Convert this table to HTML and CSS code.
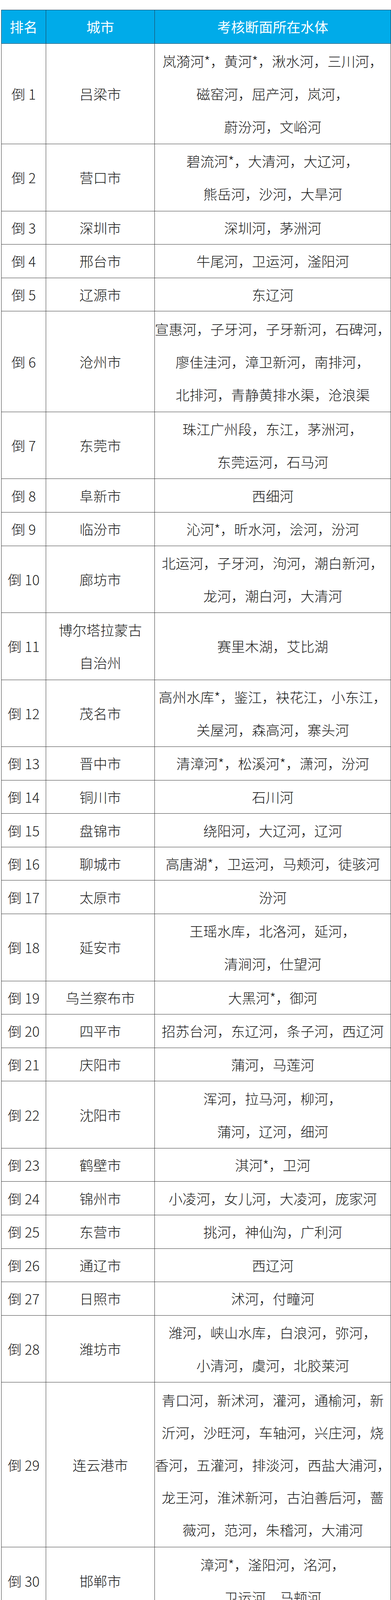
FILE: index.html
```html
<!DOCTYPE html>
<html lang="zh-CN">
<head>
<meta charset="utf-8">
<title>考核断面所在水体</title>
<link rel="stylesheet" href="styles.css">
</head>
<body>
<table class="rank">
  <colgroup>
    <col class="c-rank">
    <col class="c-city">
    <col class="c-water">
  </colgroup>
  <thead>
    <tr class="l1"><th>排名</th><th>城市</th><th>考核断面所在水体</th></tr>
  </thead>
  <tbody>
    <tr class="l3"><td>倒 1</td><td>吕梁市</td><td>岚漪河*，黄河*，湫水河，三川河，<br>磁窑河，屈产河，岚河，<br>蔚汾河，文峪河</td></tr>
    <tr class="l2"><td>倒 2</td><td>营口市</td><td>碧流河*，大清河，大辽河，<br>熊岳河，沙河，大旱河</td></tr>
    <tr class="l1"><td>倒 3</td><td>深圳市</td><td>深圳河，茅洲河</td></tr>
    <tr class="l1"><td>倒 4</td><td>邢台市</td><td>牛尾河，卫运河，滏阳河</td></tr>
    <tr class="l1"><td>倒 5</td><td>辽源市</td><td>东辽河</td></tr>
    <tr class="l3"><td>倒 6</td><td>沧州市</td><td>宣惠河，子牙河，子牙新河，石碑河，<br>廖佳洼河，漳卫新河，南排河，<br>北排河，青静黄排水渠，沧浪渠</td></tr>
    <tr class="l2"><td>倒 7</td><td>东莞市</td><td>珠江广州段，东江，茅洲河，<br>东莞运河，石马河</td></tr>
    <tr class="l1"><td>倒 8</td><td>阜新市</td><td>西细河</td></tr>
    <tr class="l1"><td>倒 9</td><td>临汾市</td><td>沁河*，昕水河，浍河，汾河</td></tr>
    <tr class="l2"><td>倒 10</td><td>廊坊市</td><td>北运河，子牙河，泃河，潮白新河，<br>龙河，潮白河，大清河</td></tr>
    <tr class="l2"><td>倒 11</td><td>博尔塔拉蒙古<br>自治州</td><td>赛里木湖，艾比湖</td></tr>
    <tr class="l2"><td>倒 12</td><td>茂名市</td><td>高州水库*，鉴江，袂花江，小东江，<br>关屋河，森高河，寨头河</td></tr>
    <tr class="l1"><td>倒 13</td><td>晋中市</td><td>清漳河*，松溪河*，潇河，汾河</td></tr>
    <tr class="l1"><td>倒 14</td><td>铜川市</td><td>石川河</td></tr>
    <tr class="l1"><td>倒 15</td><td>盘锦市</td><td>绕阳河，大辽河，辽河</td></tr>
    <tr class="l1"><td>倒 16</td><td>聊城市</td><td>高唐湖*，卫运河，马颊河，徒骇河</td></tr>
    <tr class="l1"><td>倒 17</td><td>太原市</td><td>汾河</td></tr>
    <tr class="l2"><td>倒 18</td><td>延安市</td><td>王瑶水库，北洛河，延河，<br>清涧河，仕望河</td></tr>
    <tr class="l1"><td>倒 19</td><td>乌兰察布市</td><td>大黑河*，御河</td></tr>
    <tr class="l1"><td>倒 20</td><td>四平市</td><td>招苏台河，东辽河，条子河，西辽河</td></tr>
    <tr class="l1"><td>倒 21</td><td>庆阳市</td><td>蒲河，马莲河</td></tr>
    <tr class="l2"><td>倒 22</td><td>沈阳市</td><td>浑河，拉马河，柳河，<br>蒲河，辽河，细河</td></tr>
    <tr class="l1"><td>倒 23</td><td>鹤壁市</td><td>淇河*，卫河</td></tr>
    <tr class="l1"><td>倒 24</td><td>锦州市</td><td>小凌河，女儿河，大凌河，庞家河</td></tr>
    <tr class="l1"><td>倒 25</td><td>东营市</td><td>挑河，神仙沟，广利河</td></tr>
    <tr class="l1"><td>倒 26</td><td>通辽市</td><td>西辽河</td></tr>
    <tr class="l1"><td>倒 27</td><td>日照市</td><td>沭河，付疃河</td></tr>
    <tr class="l2"><td>倒 28</td><td>潍坊市</td><td>潍河，峡山水库，白浪河，弥河，<br>小清河，虞河，北胶莱河</td></tr>
    <tr class="l5"><td>倒 29</td><td>连云港市</td><td>青口河，新沭河，灌河，通榆河，新<br>沂河，沙旺河，车轴河，兴庄河，烧<br>香河，五灌河，排淡河，西盐大浦河，<br>龙王河，淮沭新河，古泊善后河，蔷<br>薇河，范河，朱稽河，大浦河</td></tr>
    <tr class="l2"><td>倒 30</td><td>邯郸市</td><td>漳河*，滏阳河，洺河，<br>卫运河，马颊河</td></tr>
  </tbody>
</table>
</body>
</html>
```
FILE: styles.css
```css
html, body {
  margin: 0;
  padding: 0;
  background: #ffffff;
}

body {
  padding: 25px 0 0 3px;
  font-family: "Noto Sans CJK SC", sans-serif;
  color: #1c1c1c;
}

.rank {
  border-collapse: collapse;
  table-layout: fixed;
  width: 996px;
}

.c-rank { width: 114px; }
.c-city { width: 278px; }
.c-water { width: 604px; }

.rank th,
.rank td {
  border: 1px solid #3a3a3a;
  padding: 0;
  text-align: center;
  vertical-align: middle;
  font-size: 35.5px;
  line-height: 84px;
  white-space: nowrap;
  overflow: hidden;
}

.rank .l1 { height: 85.6px; }
.rank .l2 { height: 171.5px; }
.rank .l3 { height: 257.5px; }
.rank .l5 { height: 422px; }
.rank .l5 td { line-height: 83px; }

.rank td {
  font-weight: 300;
}

.rank th {
  background: #00abe9;
  color: #ffffff;
  font-weight: 400;
  border-color: #1f3f55;
}
```
